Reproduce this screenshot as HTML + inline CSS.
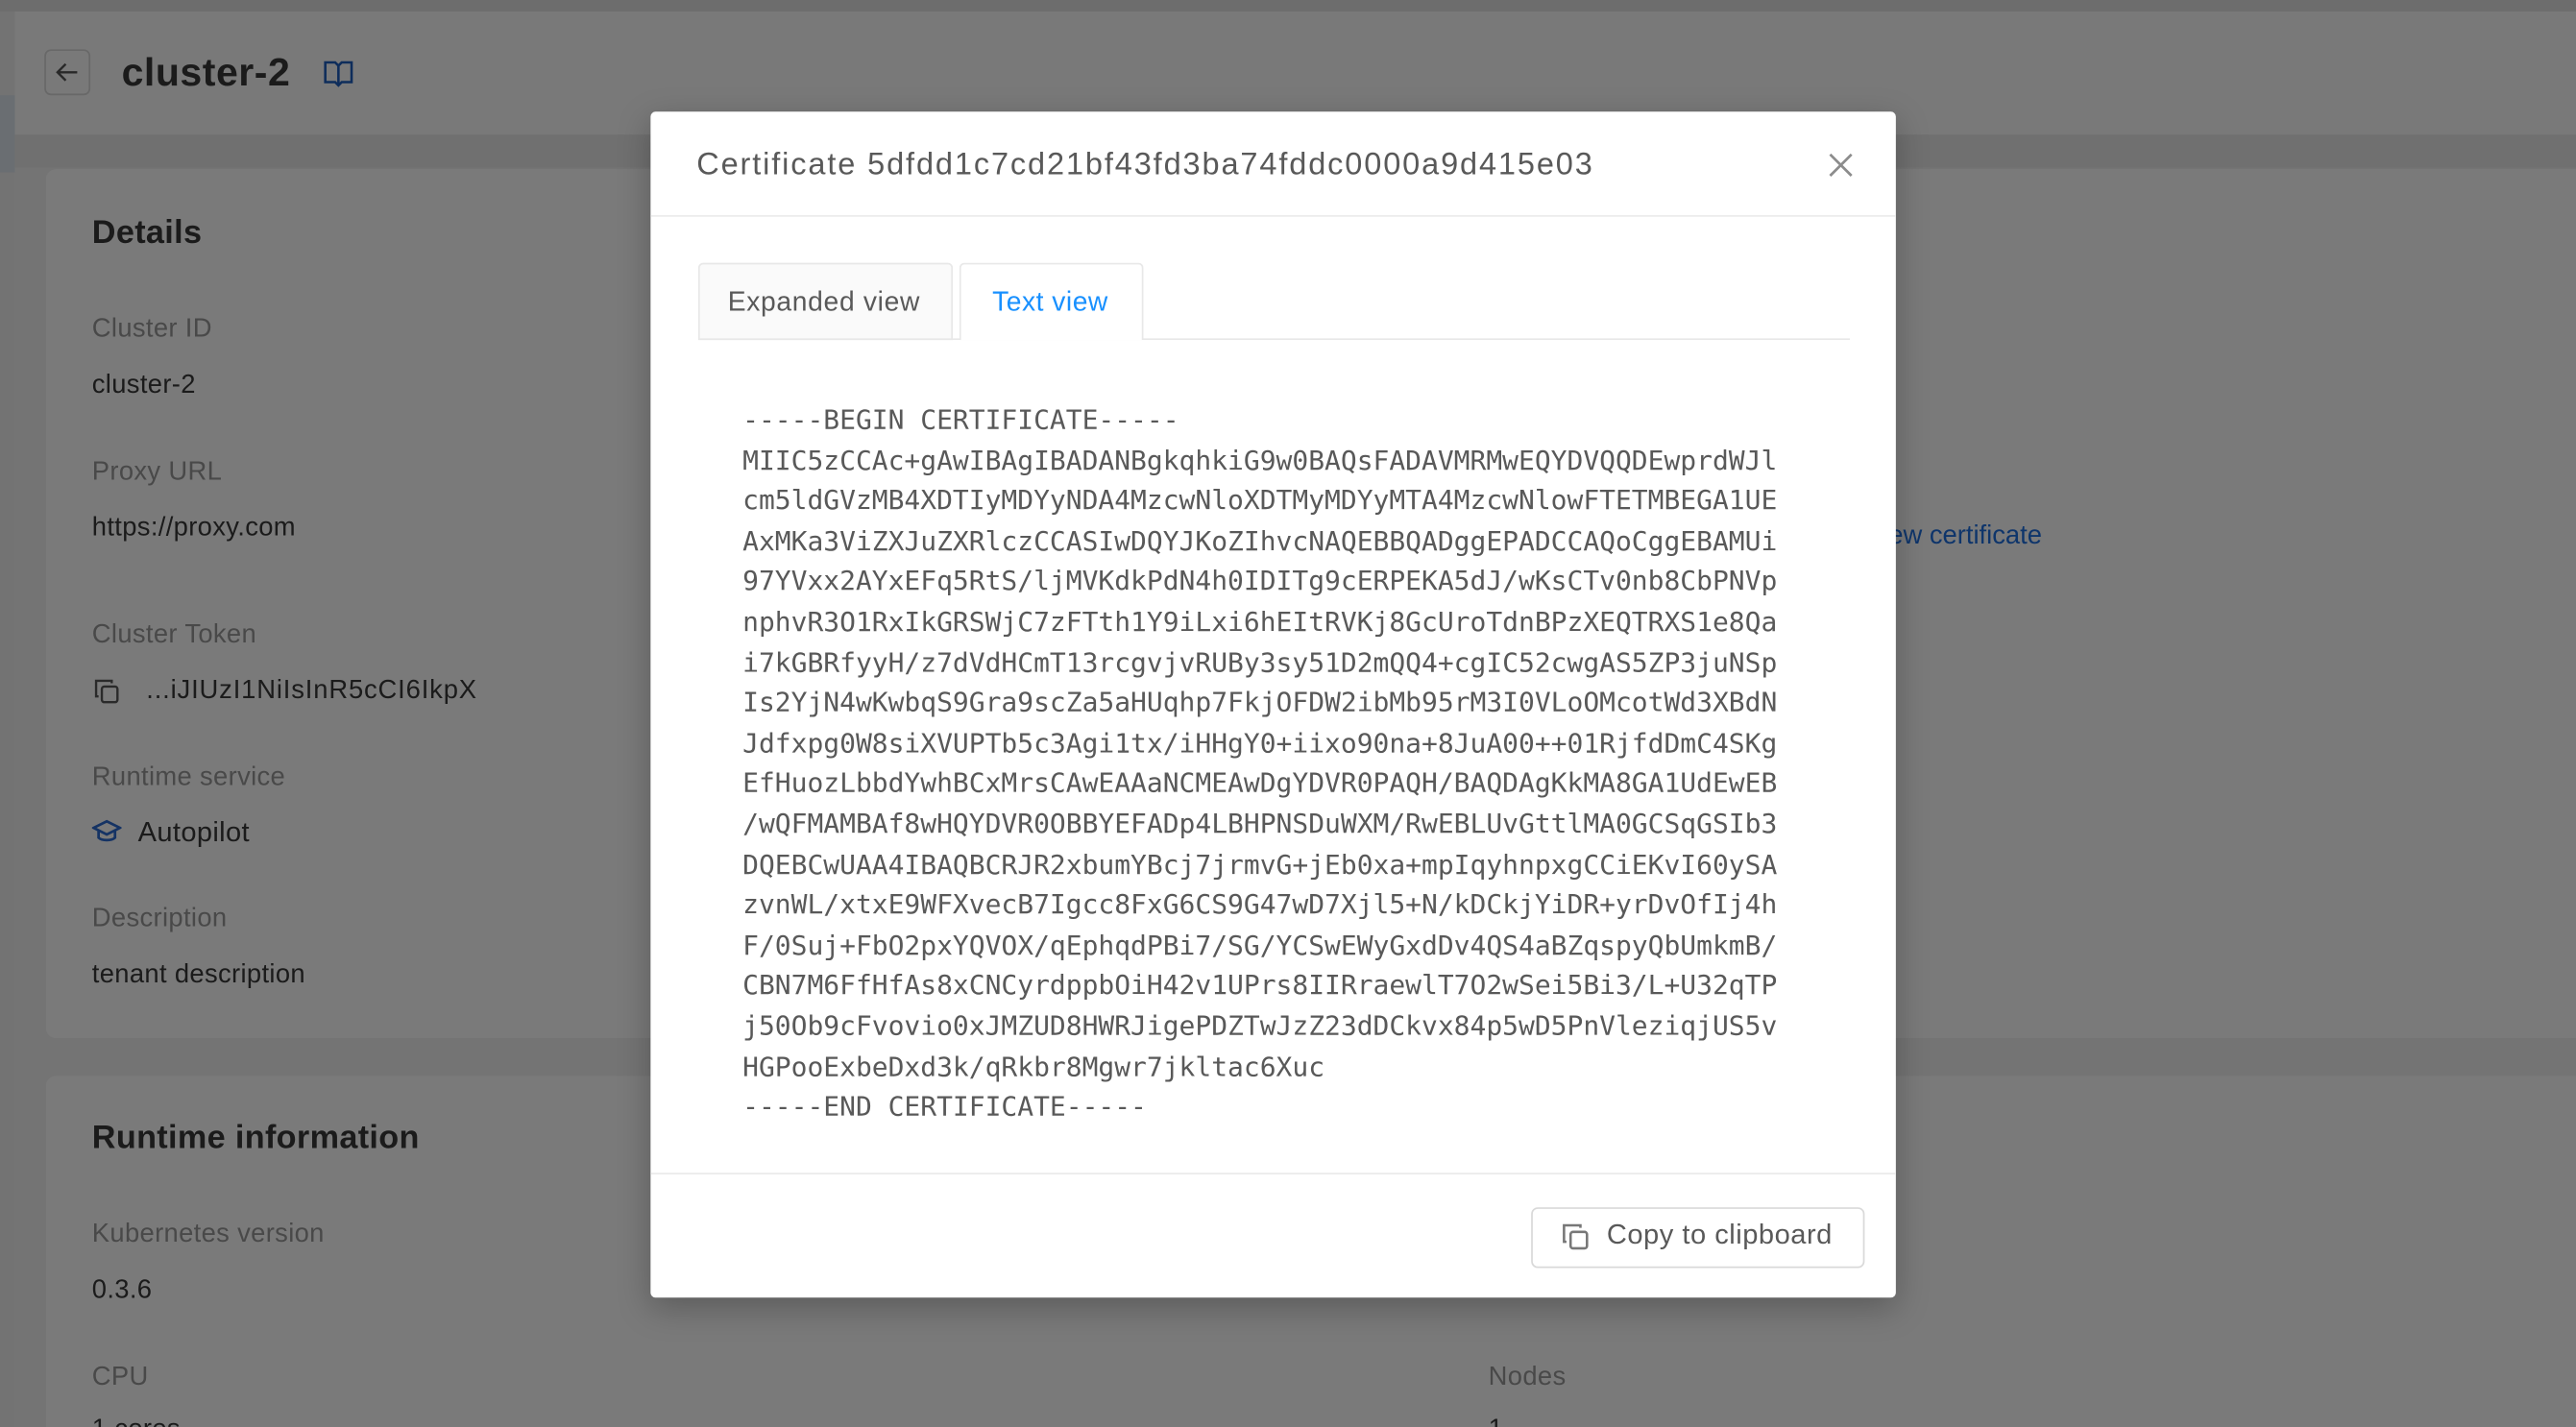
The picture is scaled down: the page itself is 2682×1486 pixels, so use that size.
<!DOCTYPE html>
<html><head><meta charset="utf-8">
<style>
*{box-sizing:border-box;margin:0;padding:0}
html,body{width:2682px;height:1486px;overflow:hidden;background:#7a7a7a}
#s{position:absolute;left:0;top:0;width:1568px;height:868.8px;transform:scale(1.71046);transform-origin:0 0;font-family:"Liberation Sans",sans-serif;background:#f2f2f2;overflow:hidden}
.a{position:absolute}
.lbl{position:absolute;font-size:16px;color:#9a9a9a;letter-spacing:.2px}
.val{position:absolute;font-size:16px;color:#3a3a3a;letter-spacing:.2px}
.card{position:absolute;background:#fff;border-radius:6px}
#ov{position:absolute;left:0;top:0;width:1568px;height:869px;background:rgba(0,0,0,0.52)}
#m{position:absolute;left:396px;top:68px;width:758px;height:722px;background:#fff;border-radius:3px;box-shadow:0 6px 20px rgba(0,0,0,.25)}
pre{font-family:"DejaVu Sans Mono","Liberation Mono",monospace;font-size:16.35px;line-height:24.6px;color:#595959}
</style></head><body><div id="s">
<div class="a" style="left:0;top:0;width:1568px;height:7px;background:#e4e4e4"></div>
<div class="a" style="left:0;top:7px;width:1568px;height:75px;background:#fcfcfc"></div>
<div class="a" style="left:0;top:82px;width:1568px;height:20px;background:#ebebeb"></div>
<div class="a" style="left:0;top:7px;width:9px;height:862px;background:#f0f0f0"></div>
<div class="a" style="left:0;top:58px;width:9px;height:47px;background:#dde6ee"></div>
<div class="a" style="left:27px;top:30px;width:28px;height:28px;border:1px solid #d9d9d9;border-radius:4px"></div>
<svg class="a" style="left:32px;top:35px" width="18" height="18" viewBox="0 0 18 18"><path d="M15 9H3M8 4L3 9l5 5" stroke="#555" stroke-width="1.4" fill="none"/></svg>
<div class="a" style="left:74px;top:31px;font-size:24px;font-weight:bold;color:#3a3a3a;letter-spacing:.3px">cluster-2</div>
<svg class="a" style="left:196px;top:36px" width="20" height="18" viewBox="0 0 20 18"><path d="M2 2h6l2 2 2-2h6v12h-6l-2 2-2-2H2z M10 4v12" stroke="#1f5fbf" stroke-width="1.5" fill="none"/></svg>
<div class="card" style="left:28px;top:103px;width:1560px;height:529px"></div>
<div class="a" style="left:56px;top:131px;font-size:20px;font-weight:bold;color:#3a3a3a;letter-spacing:.2px">Details</div>
<div class="lbl" style="left:56px;top:192px">Cluster ID</div>
<div class="val" style="left:56px;top:226px">cluster-2</div>
<div class="lbl" style="left:56px;top:279px">Proxy URL</div>
<div class="val" style="left:56px;top:313px">https://proxy.com</div>
<div class="lbl" style="left:56px;top:378px">Cluster Token</div>
<svg class="a" style="left:56px;top:412px" width="18" height="18" viewBox="0 0 18 18"><path d="M4 12H2.5V2.5H12V4" stroke="#595959" stroke-width="1.4" fill="none"/><rect x="6" y="6" width="9.5" height="9.5" rx="1.5" stroke="#595959" stroke-width="1.4" fill="none"/></svg>
<div class="val" style="left:89px;top:412px;letter-spacing:.5px">...iJIUzI1NiIsInR5cCI6IkpX</div>
<div class="lbl" style="left:56px;top:465px">Runtime service</div>
<svg class="a" style="left:56px;top:498px" width="18" height="16" viewBox="0 0 18 16"><path d="M1 6l8-4 8 4-8 4z M4 8v4c2 2 8 2 10 0V8" stroke="#2c6bd1" stroke-width="1.6" fill="none"/></svg>
<div class="val" style="left:84px;top:497px;font-size:17px">Autopilot</div>
<div class="lbl" style="left:56px;top:551px">Description</div>
<div class="val" style="left:56px;top:585px">tenant description</div>
<div class="a" style="left:1138px;top:318px;font-size:16px;color:#1f6fe0">view certificate</div>
<div class="card" style="left:28px;top:655px;width:1560px;height:260px"></div>
<div class="a" style="left:56px;top:682px;font-size:20px;font-weight:bold;color:#3a3a3a;letter-spacing:.2px">Runtime information</div>
<div class="lbl" style="left:56px;top:743px">Kubernetes version</div>
<div class="val" style="left:56px;top:777px">0.3.6</div>
<div class="lbl" style="left:56px;top:830px">CPU</div>
<div class="val" style="left:56px;top:862px">1 cores</div>
<div class="lbl" style="left:906px;top:830px">Nodes</div>
<div class="val" style="left:906px;top:862px">1</div>
<div id="ov"></div>
<div id="m">
<div class="a" style="left:28px;top:22px;font-size:19px;color:#595959;letter-spacing:1.1px">Certificate 5dfdd1c7cd21bf43fd3ba74fddc0000a9d415e03</div>
<svg class="a" style="left:716px;top:24px" width="17" height="17" viewBox="0 0 17 17"><path d="M2 2l13 13M15 2L2 15" stroke="#8c8c8c" stroke-width="1.6"/></svg>
<div class="a" style="left:0;top:63px;width:758px;height:1px;background:#ebebeb"></div>
<div class="a" style="left:29px;top:138px;width:701px;height:1px;background:#e8e8e8"></div>
<div class="a" style="left:29px;top:92px;width:155px;height:47px;background:#fafafa;border:1px solid #e8e8e8;border-radius:3px 3px 0 0"></div>
<div class="a" style="left:47px;top:107px;font-size:16.5px;color:#595959;letter-spacing:.4px">Expanded view</div>
<div class="a" style="left:188px;top:92px;width:112px;height:47px;background:#fff;border:1px solid #e8e8e8;border-bottom:none;border-radius:3px 3px 0 0"></div>
<div class="a" style="left:208px;top:107px;font-size:16.5px;color:#1890ff;letter-spacing:.3px">Text view</div>
<pre class="a" style="left:56px;top:176px">-----BEGIN CERTIFICATE-----
MIIC5zCCAc+gAwIBAgIBADANBgkqhkiG9w0BAQsFADAVMRMwEQYDVQQDEwprdWJl
cm5ldGVzMB4XDTIyMDYyNDA4MzcwNloXDTMyMDYyMTA4MzcwNlowFTETMBEGA1UE
AxMKa3ViZXJuZXRlczCCASIwDQYJKoZIhvcNAQEBBQADggEPADCCAQoCggEBAMUi
97YVxx2AYxEFq5RtS/ljMVKdkPdN4h0IDITg9cERPEKA5dJ/wKsCTv0nb8CbPNVp
nphvR3O1RxIkGRSWjC7zFTth1Y9iLxi6hEItRVKj8GcUroTdnBPzXEQTRXS1e8Qa
i7kGBRfyyH/z7dVdHCmT13rcgvjvRUBy3sy51D2mQQ4+cgIC52cwgAS5ZP3juNSp
Is2YjN4wKwbqS9Gra9scZa5aHUqhp7FkjOFDW2ibMb95rM3I0VLoOMcotWd3XBdN
Jdfxpg0W8siXVUPTb5c3Agi1tx/iHHgY0+iixo90na+8JuA00++01RjfdDmC4SKg
EfHuozLbbdYwhBCxMrsCAwEAAaNCMEAwDgYDVR0PAQH/BAQDAgKkMA8GA1UdEwEB
/wQFMAMBAf8wHQYDVR0OBBYEFADp4LBHPNSDuWXM/RwEBLUvGttlMA0GCSqGSIb3
DQEBCwUAA4IBAQBCRJR2xbumYBcj7jrmvG+jEb0xa+mpIqyhnpxgCCiEKvI60ySA
zvnWL/xtxE9WFXvecB7Igcc8FxG6CS9G47wD7Xjl5+N/kDCkjYiDR+yrDvOfIj4h
F/0Suj+FbO2pxYQVOX/qEphqdPBi7/SG/YCSwEWyGxdDv4QS4aBZqspyQbUmkmB/
CBN7M6FfHfAs8xCNCyrdppbOiH42v1UPrs8IIRraewlT7O2wSei5Bi3/L+U32qTP
j50Ob9cFvovio0xJMZUD8HWRJigePDZTwJzZ23dDCkvx84p5wD5PnVleziqjUS5v
HGPooExbeDxd3k/qRkbr8Mgwr7jkltac6Xuc
-----END CERTIFICATE-----</pre>
<div class="a" style="left:0;top:646px;width:758px;height:1px;background:#ebebeb"></div>
<div class="a" style="left:536px;top:667px;width:203px;height:37px;border:1px solid #d9d9d9;border-radius:4px"></div>
<svg class="a" style="left:553px;top:675px" width="20" height="20" viewBox="0 0 20 20"><path d="M4.5 13H3V3h10v1.5" stroke="#777" stroke-width="1.5" fill="none"/><rect x="7" y="7" width="10" height="10" rx="1.5" stroke="#777" stroke-width="1.5" fill="none"/></svg>
<div class="a" style="left:582px;top:674px;font-size:17px;color:#595959;letter-spacing:.3px">Copy to clipboard</div>
</div>
</div></body></html>
